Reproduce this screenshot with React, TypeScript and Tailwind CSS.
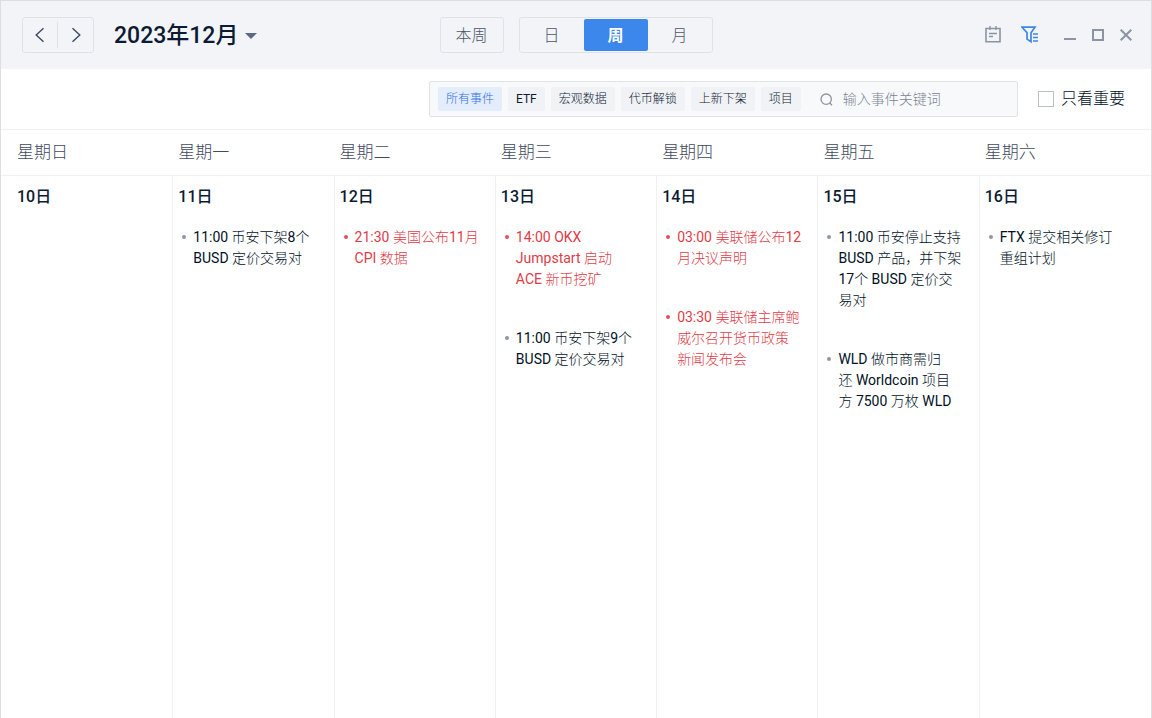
import React, { useState } from "react";

type CalendarEvent = { text: string; important?: boolean };
type Day = { weekday: string; date: string; events: CalendarEvent[] };

const WEEK: Day[] = [
  { weekday: "星期日", date: "10日", events: [] },
  { weekday: "星期一", date: "11日", events: [{ text: "11:00 币安下架8个 BUSD 定价交易对" }] },
  { weekday: "星期二", date: "12日", events: [{ text: "21:30 美国公布11月 CPI 数据", important: true }] },
  {
    weekday: "星期三",
    date: "13日",
    events: [
      { text: "14:00 OKX Jumpstart 启动 ACE\u00a0新币挖矿", important: true },
      { text: "11:00 币安下架9个 BUSD 定价交易对" },
    ],
  },
  {
    weekday: "星期四",
    date: "14日",
    events: [
      { text: "03:00 美联储公布12月决议声明", important: true },
      { text: "03:30 美联储主席鲍威尔召开货币政策新闻发布会", important: true },
    ],
  },
  {
    weekday: "星期五",
    date: "15日",
    events: [
      { text: "11:00 币安停止支持 BUSD 产品，并下架17个 BUSD 定价交易对" },
      { text: "WLD 做市商需归还\u00a0Worldcoin 项目方\u00a07500 万枚 WLD" },
    ],
  },
  { weekday: "星期六", date: "16日", events: [{ text: "FTX 提交相关修订重组计划" }] },
];

const CATEGORIES = ["所有事件", "ETF", "宏观数据", "代币解锁", "上新下架", "项目"];
const VIEWS = ["日", "周", "月"];

function Header() {
  const [view, setView] = useState("周");
  return (
    <header className="grid h-[68px] grid-cols-[1fr_auto_1fr] items-center bg-[#f2f4f8] px-[19px]">
      <div className="flex items-center gap-5 pl-[2px]">
        <div className="flex h-9 items-center rounded-[3px] border border-[#dfe2e7]">
          <button type="button" aria-label="上一周" className="flex h-full w-[34px] items-center justify-center text-[#3c4a5f]">
            <svg width="16" height="16" viewBox="0 0 16 16" fill="none" stroke="currentColor" strokeWidth="1.4">
              <path d="M11.5 1.2 4.2 8l7.3 6.8" />
            </svg>
          </button>
          <span className="h-[26px] w-px bg-[#dfe2e7]" />
          <button type="button" aria-label="下一周" className="flex h-full w-[35px] items-center justify-center text-[#3c4a5f]">
            <svg width="16" height="16" viewBox="0 0 16 16" fill="none" stroke="currentColor" strokeWidth="1.4">
              <path d="M4.5 1.2 11.8 8l-7.3 6.8" />
            </svg>
          </button>
        </div>
        <button
          type="button"
          className="flex items-center gap-[7px] pt-px font-['Roboto','Noto_Sans_CJK_SC',sans-serif] text-[23px] leading-8 font-medium text-[#0b1b33]"
        >
          2023年12月
          <svg width="12" height="6" viewBox="0 0 12 6" fill="#5a6a80">
            <path d="M0 0h12L6 6z" />
          </svg>
        </button>
      </div>

      <div className="flex items-center gap-[15px]">
        <button type="button" className="h-9 w-16 rounded-[3px] border border-[#dfe2e7] pt-px text-base text-[#4b5568]">
          本周
        </button>
        <div className="flex h-9 items-center rounded-[3px] border border-[#dfe2e7]">
          {VIEWS.map((v) => (
            <button
              key={v}
              type="button"
              aria-pressed={v === view}
              onClick={() => setView(v)}
              className={
                v === view
                  ? "h-8 w-16 rounded-[2px] bg-[#3b87eb] pt-px font-['Roboto','Noto_Sans_CJK_SC',sans-serif] text-base font-bold text-white"
                  : "h-8 w-16 pt-px text-base text-[#4b5568]"
              }
            >
              {v}
            </button>
          ))}
        </div>
      </div>

      <div className="flex items-center justify-end text-[#8a94a3]">
        <button type="button" aria-label="日程" className="mr-5">
          <svg width="16" height="18" viewBox="0 0 16 18" fill="none" stroke="currentColor">
            <path d="M1 2.5h14v13.3H1z" strokeWidth="1.6" />
            <path d="M5 0v4M11 0v4M4 7.5h8M4 10.5h4" strokeWidth="1.4" />
          </svg>
        </button>
        <button type="button" aria-label="筛选" className="mr-[26px] text-[#3b87eb]">
          <svg width="17" height="18" viewBox="0 0 17 18" fill="none" stroke="currentColor" strokeWidth="1.7">
            <path d="M1 1.2h13L10 6.7v9l-4-2.6V6.7z" />
            <path d="M12 8h5M12 11.5h5M12 15h5" strokeWidth="1.4" />
          </svg>
        </button>
        <button type="button" aria-label="最小化" className="mr-4">
          <svg width="12" height="12" viewBox="0 0 12 12" fill="currentColor">
            <path d="M0 9h12v2H0z" />
          </svg>
        </button>
        <button type="button" aria-label="最大化" className="mr-4">
          <svg width="12" height="12" viewBox="0 0 12 12" fill="none" stroke="currentColor" strokeWidth="2">
            <path d="M1 1h10v10H1z" />
          </svg>
        </button>
        <button type="button" aria-label="关闭">
          <svg width="12" height="12" viewBox="0 0 12 12" fill="none" stroke="currentColor" strokeWidth="2">
            <path d="m.7.7 10.6 10.6M11.3.7.7 11.3" />
          </svg>
        </button>
      </div>
    </header>
  );
}

function FilterBar() {
  const [category, setCategory] = useState("所有事件");
  return (
    <div className="flex h-[61px] items-center justify-end gap-5 border-b border-[#f0f1f4] pr-[26px]">
      <div className="flex h-9 w-[589px] items-center rounded-[2px] border border-[#dfe2e7] bg-[#f8f9fb] pl-2">
        <div className="flex gap-[6px]">
          {CATEGORIES.map((c) => (
            <button
              key={c}
              type="button"
              aria-pressed={c === category}
              onClick={() => setCategory(c)}
              className={
                c === category
                  ? "h-6 rounded-[2px] bg-[#e3edfb] px-2 text-xs text-[#2f6fe6]"
                  : "h-6 rounded-[2px] bg-[#f1f2f6] px-2 text-xs text-[#0b1b33]"
              }
            >
              {c}
            </button>
          ))}
        </div>
        <label className="ml-[19px] flex min-w-0 flex-1 items-center gap-[10px]">
          <svg aria-hidden="true" width="13" height="13" viewBox="0 0 13 13" fill="none" stroke="#8a94a3" strokeWidth="1.3">
            <circle cx="6.2" cy="6.2" r="5.2" />
            <path d="m9.6 9.8 2.4 2.4" />
          </svg>
          <input
            type="text"
            aria-label="搜索事件"
            placeholder="输入事件关键词"
            className="min-w-0 flex-1 bg-transparent text-sm text-[#1c2a40] outline-none placeholder:text-[#7a8494]"
          />
        </label>
      </div>
      <label className="flex items-center gap-[7px] text-base text-[#001026]">
        <input type="checkbox" className="size-4 appearance-none border border-[#b9c0cb] bg-white checked:bg-[#3b87eb]" />
        只看重要
      </label>
    </div>
  );
}

function EventItem({ text, important }: CalendarEvent) {
  return (
    <li className={important ? "flex gap-[7px] text-[#e03c48]" : "flex gap-[7px] text-[#001026]"}>
      <span
        className={
          important
            ? "mt-2 size-1 shrink-0 rounded-full bg-[#e2505b]"
            : "mt-2 size-1 shrink-0 rounded-full bg-[#8f97a5]"
        }
      />
      <span>{text}</span>
    </li>
  );
}

function WeekTable() {
  return (
    <table className="w-full flex-1 table-fixed border-separate border-spacing-0 text-left">
      <colgroup>
        <col className="w-[10px]" />
        {WEEK.map((d) => (
          <col key={d.date} />
        ))}
        <col className="w-[11px]" />
      </colgroup>
      <thead>
        <tr className="h-[46px]">
          <td className="border-b border-[#f0f1f4]" />
          {WEEK.map((d) => (
            <th
              key={d.date}
              scope="col"
              className="border-b border-[#f0f1f4] pl-[6px] text-[17px] font-normal text-[#3f4a5e]"
            >
              {d.weekday}
            </th>
          ))}
          <td className="border-b border-[#f0f1f4]" />
        </tr>
      </thead>
      <tbody>
        <tr>
          <td />
          {WEEK.map((d) => (
            <td
              key={d.date}
              className="border-l border-[#f0f1f4] pt-[9px] pr-[15px] pl-[5px] align-top nth-2:border-transparent"
            >
              <h2 className="mb-[18px] font-['Roboto','Noto_Sans_CJK_SC',sans-serif] text-base leading-6 font-medium text-[#0b1b33]">
                {d.date}
              </h2>
              <ul className="flex flex-col gap-[38px] pl-1 text-sm leading-[21px] font-[380]">
                {d.events.map((e) => (
                  <EventItem key={e.text} {...e} />
                ))}
              </ul>
            </td>
          ))}
          <td />
        </tr>
      </tbody>
    </table>
  );
}

export default function App() {
  return (
    <div className="flex min-h-screen flex-col border-x border-t border-[#dcdee2] bg-white font-['Roboto','Noto_Sans_CJK_SC_Light','Noto_Sans_CJK_SC',sans-serif]">
      <Header />
      <FilterBar />
      <main className="flex flex-1 flex-col">
        <WeekTable />
      </main>
    </div>
  );
}
